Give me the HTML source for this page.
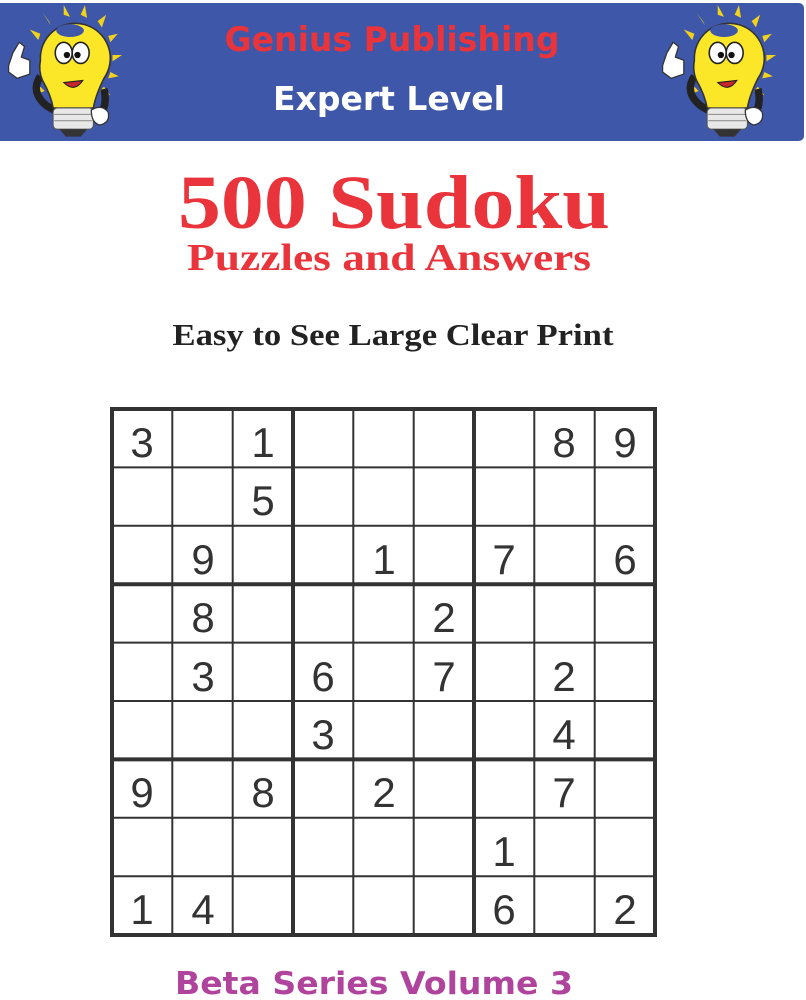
<!DOCTYPE html>
<html><head><meta charset="utf-8"><style>
html,body{margin:0;padding:0;background:#fff;}
svg{display:block}
</style></head><body>
<svg width="806" height="1000" viewBox="0 0 806 1000" xmlns="http://www.w3.org/2000/svg">
<rect x="0" y="0" width="806" height="1000" fill="#fff"/>
<rect x="-6" y="3" width="810" height="138" rx="5" fill="#3f57a8"/>
<defs>
<g id="bulb">
  <g fill="#f2d21a">
    <polygon points="40,30 30,26 38,36"/><polygon points="48,18 42,10 50,22"/>
    <polygon points="62,12 62,3 68,14"/><polygon points="78,12 82,3 84,15"/>
    <polygon points="94,18 102,12 98,24"/><polygon points="104,32 113,30 106,38"/>
    <polygon points="108,50 117,50 108,56"/><polygon points="106,66 114,70 104,72"/>
    <polygon points="100,80 106,88 96,84"/><polygon points="40,80 34,88 44,84"/>
  </g>
  <path d="M40 70 Q30 85 46 98 L58 105" stroke="#222" stroke-width="7" fill="none"/>
  <path d="M100 82 Q104 100 94 108" stroke="#222" stroke-width="7" fill="none"/>
  <path d="M40 55 A33 33 0 1 1 100 72 Q92 88 90 100 L52 100 Q50 88 42 74 Q38 65 40 55Z" fill="#fbe628" stroke="#333" stroke-width="1.5"/>
  <ellipse cx="68" cy="27" rx="13" ry="6" fill="#3f57a8"/>
  <rect x="52" y="100" width="38" height="20" rx="4" fill="#e8e8e8" stroke="#555" stroke-width="1"/>
  <line x1="53" y1="106" x2="89" y2="106" stroke="#888"/><line x1="53" y1="112" x2="89" y2="112" stroke="#888"/>
  <path d="M58 120 L84 120 L78 127 L64 127Z" fill="#333"/>
  <ellipse cx="62" cy="48" rx="8" ry="10" fill="#fff" stroke="#222" stroke-width="1.5"/>
  <ellipse cx="78" cy="48" rx="8" ry="10" fill="#fff" stroke="#222" stroke-width="1.5"/>
  <circle cx="65" cy="50" r="3" fill="#111"/><circle cx="75" cy="50" r="3" fill="#111"/>
  <path d="M62 76 Q72 86 80 74Z" fill="#c8262a" stroke="#222" stroke-width="1"/>
  <path d="M10 60 L14 48 L20 38 L25 42 L22 52 L30 55 L30 68 L18 72 L10 66Z" fill="#fff" stroke="#333" stroke-width="1.2"/>
  <path d="M88 102 Q98 96 104 104 Q106 114 96 116 Q88 114 88 102Z" fill="#fff" stroke="#333" stroke-width="1.2"/>
</g>
</defs>
<g transform="translate(-2,2) scale(1.06)"><use href="#bulb"/></g>
<g transform="translate(652,2) scale(1.06)"><use href="#bulb"/></g>

<g font-family="'DejaVu Sans','Liberation Sans',sans-serif" font-weight="bold" text-anchor="middle">
  <text x="392" y="51" font-size="34" fill="#e8343a" textLength="335" lengthAdjust="spacingAndGlyphs">Genius Publishing</text>
  <text x="389" y="110" font-size="33" fill="#fff" textLength="232" lengthAdjust="spacingAndGlyphs">Expert Level</text>
  <text x="374" y="994" font-size="31" fill="#b0449d" textLength="398" lengthAdjust="spacingAndGlyphs">Beta Series Volume 3</text>
</g>
<g font-family="'Liberation Serif',serif" font-weight="bold" text-anchor="middle">
  <text x="394" y="228" font-size="76" fill="#e8343a" textLength="432" lengthAdjust="spacingAndGlyphs">500 Sudoku</text>
  <text x="389" y="270" font-size="38" fill="#e8343a" textLength="404" lengthAdjust="spacingAndGlyphs">Puzzles and Answers</text>
  <text x="393" y="345" font-size="31" fill="#222" textLength="441" lengthAdjust="spacingAndGlyphs">Easy to See Large Clear Print</text>
</g>

<g stroke="#333">
  <g stroke-width="2">
    <line x1="172.3" y1="409" x2="172.3" y2="935"/><line x1="232.7" y1="409" x2="232.7" y2="935"/>
    <line x1="353.3" y1="409" x2="353.3" y2="935"/><line x1="413.7" y1="409" x2="413.7" y2="935"/>
    <line x1="534.3" y1="409" x2="534.3" y2="935"/><line x1="594.7" y1="409" x2="594.7" y2="935"/>
    <line x1="112" y1="467.4" x2="655" y2="467.4"/><line x1="112" y1="525.8" x2="655" y2="525.8"/>
    <line x1="112" y1="642.6" x2="655" y2="642.6"/><line x1="112" y1="701" x2="655" y2="701"/>
    <line x1="112" y1="817.8" x2="655" y2="817.8"/><line x1="112" y1="876.2" x2="655" y2="876.2"/>
  </g>
  <g stroke-width="4">
    <line x1="293" y1="409" x2="293" y2="935"/><line x1="474" y1="409" x2="474" y2="935"/>
    <line x1="112" y1="584.2" x2="655" y2="584.2"/><line x1="112" y1="759.4" x2="655" y2="759.4"/>
    <rect x="112" y="409" width="543" height="526" fill="none"/>
  </g>
</g>
<g font-family="'Liberation Sans',sans-serif" font-size="42" fill="#333" text-anchor="middle">
  <text x="142" y="457">3</text><text x="263" y="457">1</text><text x="564" y="457">8</text><text x="625" y="457">9</text>
  <text x="263" y="515">5</text>
  <text x="203" y="574">9</text><text x="384" y="574">1</text><text x="504" y="574">7</text><text x="625" y="574">6</text>
  <text x="203" y="632">8</text><text x="444" y="632">2</text>
  <text x="203" y="691">3</text><text x="323" y="691">6</text><text x="444" y="691">7</text><text x="564" y="691">2</text>
  <text x="323" y="749">3</text><text x="564" y="749">4</text>
  <text x="142" y="807">9</text><text x="263" y="807">8</text><text x="384" y="807">2</text><text x="564" y="807">7</text>
  <text x="504" y="866">1</text>
  <text x="142" y="924">1</text><text x="203" y="924">4</text><text x="504" y="924">6</text><text x="625" y="924">2</text>
</g>
</svg>
</body></html>
